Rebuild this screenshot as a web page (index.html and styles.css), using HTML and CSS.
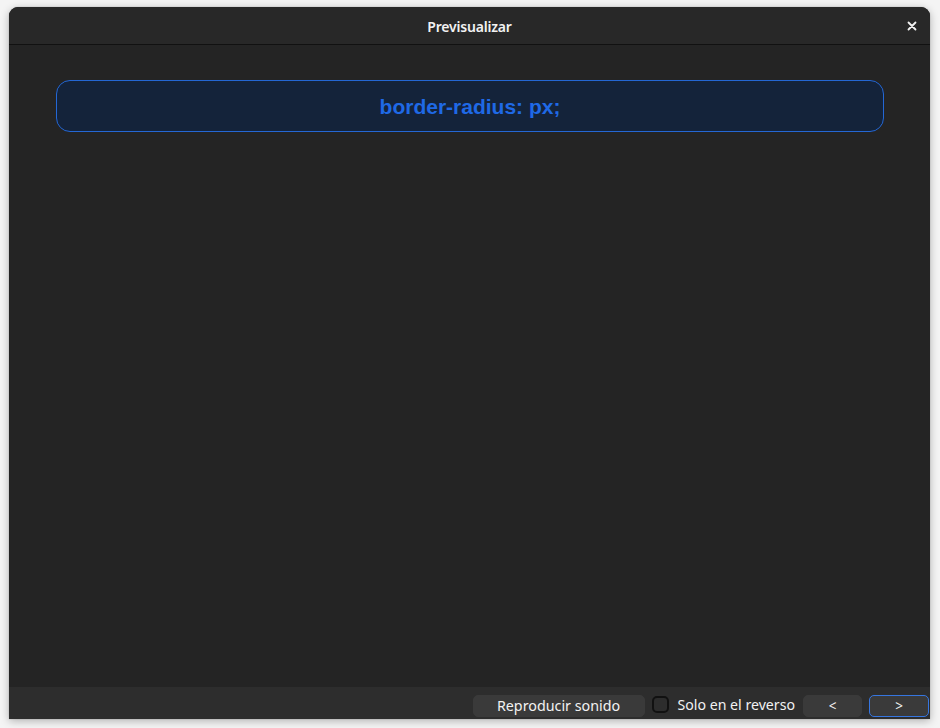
FILE: index.html
```html
<!DOCTYPE html>
<html lang="es">
<head>
<meta charset="utf-8">
<title>Previsualizar</title>
<link rel="stylesheet" href="styles.css">
</head>
<body>
<div class="window">
  <header class="titlebar">
    <span class="title">Previsualizar</span>
    <button class="close" aria-label="Cerrar">
      <svg width="10" height="10" viewBox="0 0 10 10"><path d="M1.5 1.5 L8.5 8.5 M8.5 1.5 L1.5 8.5" stroke="#f2f2f2" stroke-width="1.8" stroke-linecap="round"/></svg>
    </button>
  </header>
  <main class="content">
    <div class="card">border-radius: px;</div>
  </main>
  <footer class="footer">
    <button class="btn btn-sound">Reproducir sonido</button>
    <label class="check"><span class="box"></span><span>Solo en el reverso</span></label>
    <button class="btn btn-nav">&lt;</button>
    <button class="btn btn-nav btn-focus">&gt;</button>
  </footer>
</div>
</body>
</html>
```
FILE: styles.css
```css
html, body {
  margin: 0;
  padding: 0;
  background: #f4f4f4;
}
body {
  width: 940px;
  height: 728px;
  overflow: hidden;
  font-family: "Noto Sans", "DejaVu Sans", sans-serif;
}
.window {
  margin: 7px 10px 9px 9px;
  width: 921px;
  height: 712px;
  display: flex;
  flex-direction: column;
  background: #242424;
  border-radius: 9px 9px 0 0;
  box-shadow: 0 2px 8px rgba(0,0,0,0.28), 0 0 1px rgba(0,0,0,0.4);
  overflow: hidden;
}
.titlebar {
  height: 37px;
  flex: 0 0 auto;
  background: #282828;
  border-bottom: 1px solid #111;
  display: flex;
  align-items: center;
  justify-content: center;
  position: relative;
}
.title {
  color: #f2f2f2;
  font-size: 14px;
  font-weight: 600;
  letter-spacing: -0.2px;
  padding-top: 2px;
}
.close {
  position: absolute;
  right: 13px;
  top: 14px;
  width: 10px;
  height: 10px;
  padding: 0;
  border: 0;
  background: none;
  display: flex;
}
.content {
  flex: 1;
  padding: 35px 46px 0 47px;
}
.card {
  height: 49px;
  border: 1px solid #2467d4;
  border-radius: 14px;
  background: #14233a;
  display: flex;
  align-items: center;
  justify-content: center;
  color: #1f69e6;
  font-family: "Liberation Sans", Arial, sans-serif;
  font-weight: 700;
  font-size: 21px;
  padding-top: 1px;
  box-sizing: content-box;
}
.footer {
  height: 32px;
  flex: 0 0 auto;
  background: #2d2d2d;
  display: flex;
  justify-content: flex-end;
  align-items: flex-start;
  padding: 8px 1px 0 0;
  box-sizing: border-box;
}
.btn {
  height: 22px;
  box-sizing: border-box;
  background: #3a3a3a;
  border: 1px solid #3a3a3a;
  border-radius: 5px;
  color: #f2f2f2;
  font-family: "Noto Sans", "DejaVu Sans", sans-serif;
  font-size: 14.3px;
  line-height: 18px;
  padding: 0;
}
.btn-sound {
  width: 172px;
  margin-right: 7px;
}
.btn-nav {
  width: 59px;
  font-size: 13.5px;
}
.btn-nav + .btn-nav {
  margin-left: 7px;
  width: 60px;
}
.btn-focus {
  border-color: #3676e0;
}
.check {
  display: flex;
  align-items: center;
  gap: 9px;
  color: #f2f2f2;
  font-size: 14.15px;
  margin-right: 8px;
  height: 21px;
  margin-top: -1px;
}
.box {
  width: 17px;
  height: 17px;
  box-sizing: border-box;
  border: 2px solid #111;
  border-radius: 5px;
  background: #2d2d2d;
}
```
